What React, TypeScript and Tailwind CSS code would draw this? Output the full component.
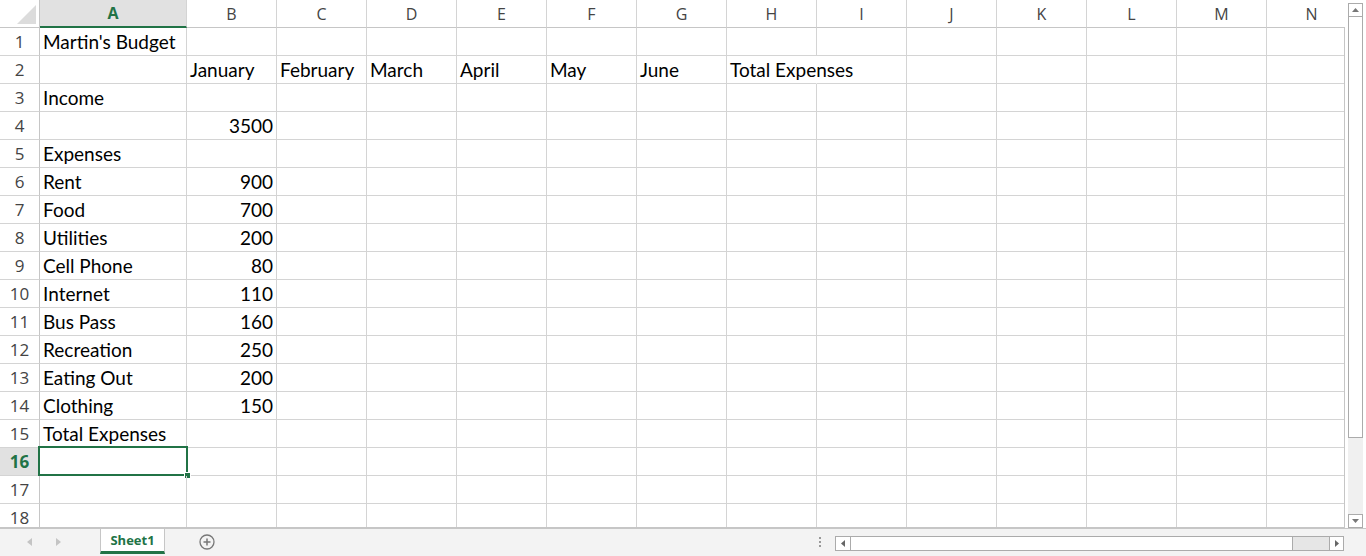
import React from 'react';

const COLS = ['A', 'B', 'C', 'D', 'E', 'F', 'G', 'H', 'I', 'J', 'K', 'L', 'M', 'N'];

// [text in A, text in B..H]
const ROWS: string[][] = [
  ["Martin's Budget"],
  ['', 'January', 'February', 'March', 'April', 'May', 'June', 'Total Expenses'],
  ['Income'],
  ['', '3500'],
  ['Expenses'],
  ['Rent', '900'],
  ['Food', '700'],
  ['Utilities', '200'],
  ['Cell Phone', '80'],
  ['Internet', '110'],
  ['Bus Pass', '160'],
  ['Recreation', '250'],
  ['Eating Out', '200'],
  ['Clothing', '150'],
  ['Total Expenses'],
  [],
  [],
  [],
];

const cellFont = { fontFamily: 'Lato, "Open Sans", sans-serif' };
const uiFont = { fontFamily: '"Open Sans", "Noto Sans", sans-serif' };

function ColumnHeader() {
  return (
    <div className="flex h-[28px] shrink-0" style={uiFont}>
      <div className="relative w-[40px] shrink-0 border-r border-b border-[#c6c6c6] bg-white">
        <svg className="absolute left-0 top-0" width="40" height="28">
          <polygon points="36,5 36,24 17,24" fill="#dcdcdc" />
        </svg>
      </div>
      {COLS.map((c, i) => (
        <div
          key={c}
          className={
            i === 0
              ? 'flex w-[147px] shrink-0 items-center justify-center border-r border-b-2 border-r-[#d4d4d4] border-b-[#217346] bg-[#e1e1e1] text-[16px] font-bold text-[#217346]'
              : 'flex w-[90px] shrink-0 items-center justify-center border-r border-b border-r-[#d4d4d4] border-b-[#c6c6c6] bg-white text-[16px] text-[#444]'
          }
        >
          {c}
        </div>
      ))}
    </div>
  );
}

function Row({ n, data }: { n: number; data: string[] }) {
  const selected = n === 16;
  return (
    <div className="flex h-[28px] shrink-0">
      <div
        className={
          selected
            ? 'flex w-[40px] shrink-0 items-end justify-center border-r border-b border-r-[#c6c6c6] border-b-[#d4d4d4] bg-[#e1e1e1] pb-[2px] text-[17px] leading-[22px] font-bold text-[#217346]'
            : 'flex w-[40px] shrink-0 items-end justify-center border-r border-b border-r-[#c6c6c6] border-b-[#d4d4d4] bg-white pb-[2px] text-[17px] leading-[22px] text-[#444]'
        }
        style={uiFont}
      >
        {n}
      </div>
      <div
        className="relative flex w-[147px] shrink-0 items-end border-r border-b border-[#d4d4d4] px-[3px] pb-[2px] text-[19px] leading-[22px] whitespace-nowrap text-black"
        style={cellFont}
      >
        {data[0]}
        {selected && (
          <div className="absolute left-[-2px] top-[-2px] h-[30px] w-[150px] border-2 border-[#217346]">
            <div className="absolute right-[-5px] bottom-[-5px] h-[7px] w-[7px] border border-white bg-[#217346]" />
          </div>
        )}
      </div>
      {COLS.slice(1).map((c, i) => {
        const text = data[i + 1] ?? '';
        const numeric = /^\d+$/.test(text);
        const overflow = n === 2 && c === 'H';
        return (
          <div
            key={c}
            className={
              (overflow ? 'border-r-transparent ' : '') +
              (numeric ? 'justify-end ' : '') +
              'flex w-[90px] shrink-0 items-end border-r border-b border-[#d4d4d4] px-[3px] pb-[2px] text-[19px] leading-[22px] whitespace-nowrap text-black'
            }
            style={cellFont}
          >
            {text}
          </div>
        );
      })}
    </div>
  );
}

function VScroll() {
  return (
    <div className="ml-[3px] mt-[3px] flex h-[525px] w-[15px] flex-col bg-[#f0f0f0]">
      <div className="flex h-[14px] items-center justify-center border border-[#ababab] bg-white">
        <svg width="7" height="4"><polygon points="0,4 7,4 3.5,0" fill="#777" /></svg>
      </div>
      <div className="h-[421px] border border-t-0 border-[#ababab] bg-white" />
      <div className="flex-1" />
      <div className="flex h-[14px] items-center justify-center border border-[#ababab] bg-white">
        <svg width="7" height="4"><polygon points="0,0 7,0 3.5,4" fill="#777" /></svg>
      </div>
    </div>
  );
}

function BottomBar() {
  return (
    <div className="flex h-[28px] items-start bg-[#f3f3f3]" style={uiFont}>
      <div className="flex h-[26px] w-[100px] items-center">
        <svg className="ml-[27px]" width="5" height="8"><polygon points="5,0 5,8 0,4" fill="#c4c4c4" /></svg>
        <svg className="ml-[24px]" width="5" height="8"><polygon points="0,0 0,8 5,4" fill="#c4c4c4" /></svg>
      </div>
      <div className="flex h-[25px] w-[65px] items-center justify-center border-x border-b-[3px] border-x-[#c6c6c6] border-b-[#217346] bg-white pt-[2px] text-[13px] font-bold text-[#217346]">
        Sheet1
      </div>
      <div className="flex h-[26px] items-center pl-[34px]">
        <svg width="16" height="16" viewBox="0 0 16 16">
          <circle cx="8" cy="8" r="7" fill="none" stroke="#777" strokeWidth="1.3" />
          <path d="M8 4.5v7M4.5 8h7" stroke="#777" strokeWidth="1.5" />
        </svg>
      </div>
      <div className="flex-1" />
      <div className="flex h-[26px] flex-col items-center justify-center gap-[2px] pr-[14px]">
        <span className="h-[2px] w-[2px] bg-[#999]" />
        <span className="h-[2px] w-[2px] bg-[#999]" />
        <span className="h-[2px] w-[2px] bg-[#999]" />
      </div>
      <div className="mr-[22px] mt-[7px] flex h-[15px] w-[509px] border border-[#ababab] bg-[#e6e6e6]">
        <div className="flex w-[15px] items-center justify-center border-r border-[#ababab] bg-white">
          <svg width="4" height="7"><polygon points="4,0 4,7 0,3.5" fill="#666" /></svg>
        </div>
        <div className="w-[442px] border-r border-[#ababab] bg-white" />
        <div className="flex-1" />
        <div className="flex w-[14px] items-center justify-center border-l border-[#ababab] bg-white">
          <svg width="4" height="7"><polygon points="0,0 0,7 4,3.5" fill="#666" /></svg>
        </div>
      </div>
    </div>
  );
}

export default function App() {
  return (
    <div className="flex h-[556px] w-[1366px] flex-col overflow-hidden bg-white">
      <div className="flex h-[528px]">
        <div className="flex w-[1345px] flex-col overflow-hidden">
          <ColumnHeader />
          <div className="relative flex-1 overflow-hidden border-r border-b border-[#c6c6c6]">
            {ROWS.map((r, i) => (
              <Row key={i} n={i + 1} data={r} />
            ))}
          </div>
        </div>
        <VScroll />
      </div>
      <div className="border-t border-[#c6c6c6]" />
      <BottomBar />
    </div>
  );
}
